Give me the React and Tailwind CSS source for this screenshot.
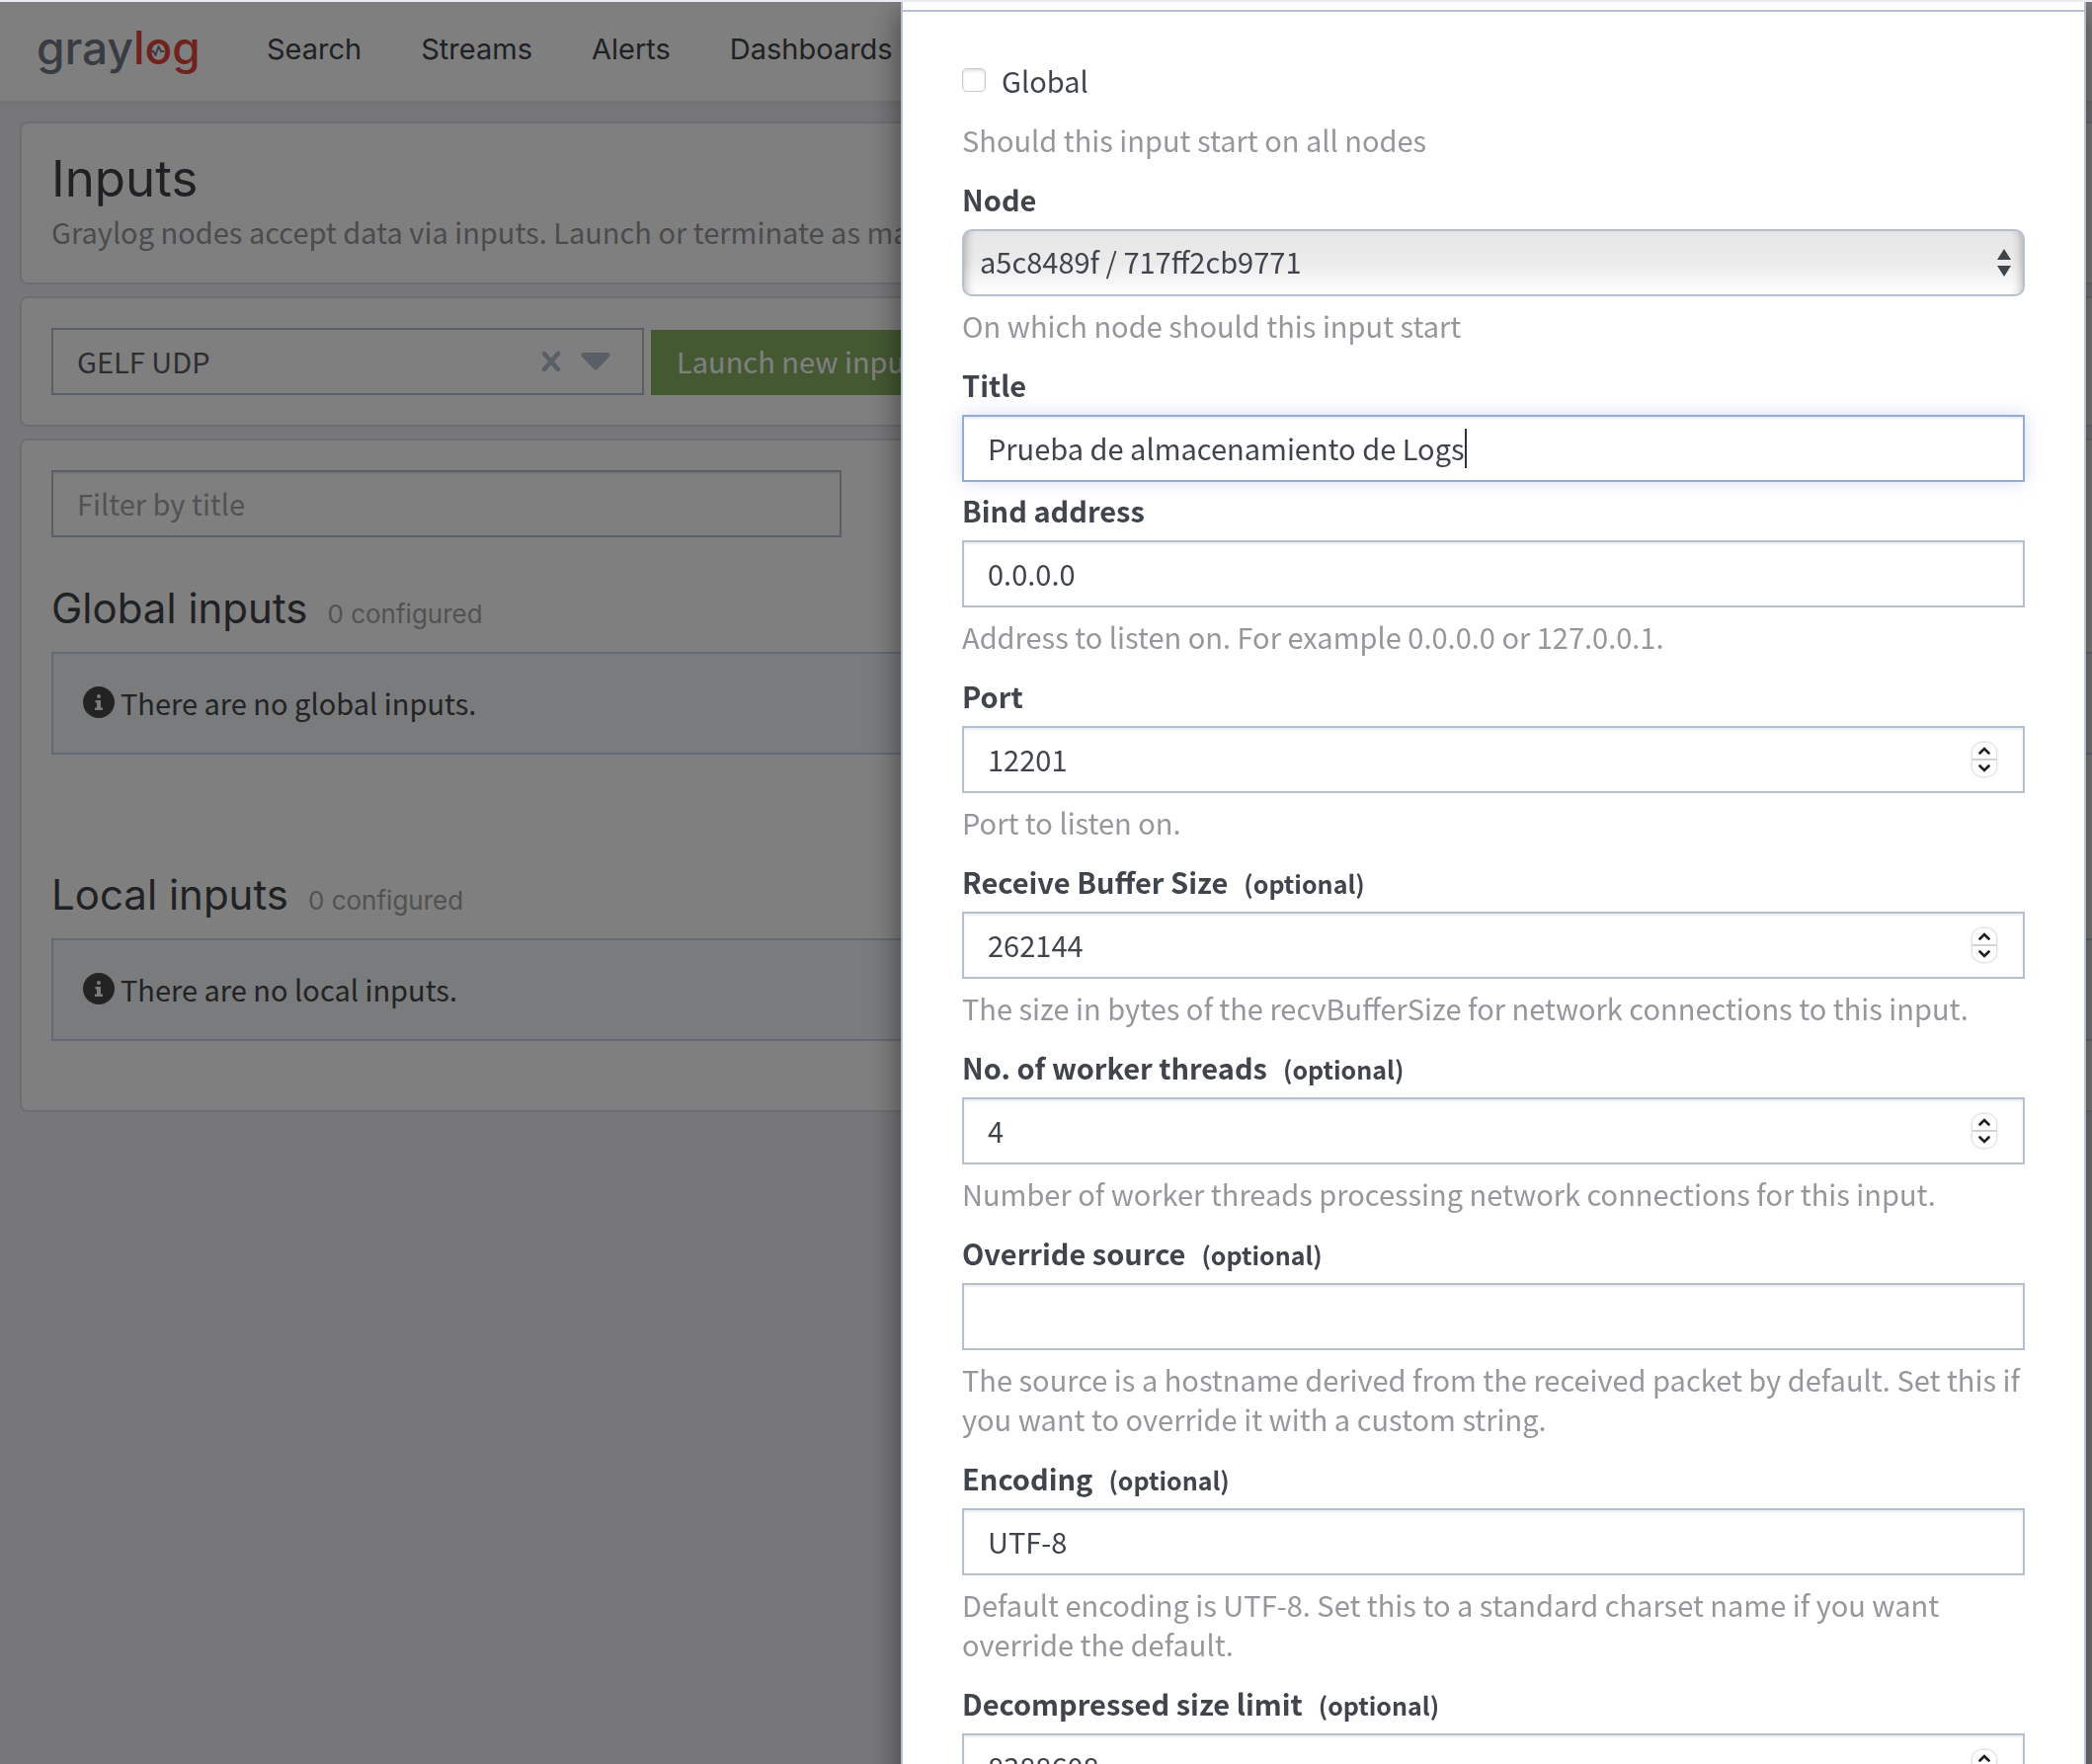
import React from "react";

const SANS = "font-['Noto_Sans_CJK_SC',sans-serif]";
const HEAD = "font-['Inter','Liberation_Sans',sans-serif]";

function Logo() {
  return (
    <a href="#home" aria-label="graylog" className="block">
      <svg viewBox="0 0 180 64" className="block h-16 w-[180px]">
        <text y="46" fontSize="46" className="font-['Inter',sans-serif] font-medium">
          <tspan x="-1" fill="#727885">gray</tspan>
          <tspan x="97" fill="#e0443f">log</tspan>
        </text>
        <path
          d="M115 33h2.500l2 4 3-9 2.500 5h2.500"
          fill="none"
          stroke="#727885"
          strokeWidth="1.800"
          strokeLinecap="round"
          strokeLinejoin="round"
        />
      </svg>
    </a>
  );
}

function InfoIcon() {
  return (
    <svg viewBox="0 0 32 32" className="size-8 shrink-0" aria-hidden="true">
      <circle cx="16" cy="16" r="16" fill="#464646" />
      <circle cx="16" cy="10" r="2" fill="#f3f6f9" />
      <path d="M12.500 14h5.500v7.500h2v2.500h-8v-2.500h2v-5h-1.500z" fill="#f3f6f9" />
    </svg>
  );
}

function Card({ children, className }) {
  return (
    <section className={`rounded-l-lg border-2 border-r-0 border-[#dddde4] bg-white pl-[30px] ${className}`}>
      {children}
    </section>
  );
}

function InputList({ title, message }) {
  return (
    <>
      <h2 className={`${HEAD} flex items-baseline gap-5 text-[42px] leading-[56px] text-[#404349]`}>
        {title}
        <small className="text-[26px] leading-none text-[#a5a5a5]">0 configured</small>
      </h2>
      <div className="mt-4 flex h-[104px] items-center gap-1.5 border-2 border-r-0 border-[#c8d3f0] bg-[#f2f6f9] pb-0.5 pl-[30px] text-[#464646]">
        <InfoIcon />
        <span>{message}</span>
      </div>
    </>
  );
}

function Page() {
  return (
    <div className="min-h-screen bg-[#eeeef2]">
      <header className="flex h-[102px] items-center bg-white pl-[38px] shadow-[0_3px_6px_rgba(80,80,90,0.06)]">
        <Logo />
        <nav className={`${HEAD} flex gap-[60px] pb-0.5 pl-[52px] text-[29px] text-[#404349]`}>
          <a href="#search">Search</a>
          <a href="#streams">Streams</a>
          <a href="#alerts">Alerts</a>
          <a href="#dashboards">Dashboards</a>
        </nav>
      </header>
      <main className="flex flex-col gap-3 pt-[21px] pl-5 whitespace-nowrap">
        <Card className="h-[165px] pt-[26px]">
          <h1 className={`${HEAD} mb-[3px] text-[51px] leading-[60px] text-[#404349]`}>Inputs</h1>
          <p className="text-[#96979b]">
            Graylog nodes accept data via inputs. Launch or terminate as many inputs as you want here.
          </p>
        </Card>
        <Card className="flex gap-[7px] py-[30px]">
          <div className="flex h-[68px] w-[600px] items-center border-2 border-[#b5bfce] pr-8 pb-0.5 pl-6 text-[#5a5c63]">
            <span className="flex-1">GELF UDP</span>
            <button type="button" aria-label="Clear" className="mr-5">
              <svg viewBox="0 0 20 22" className="h-[22px] w-5">
                <path d="M3 4l14 16M17 4l-14 16" stroke="#b5bfce" strokeWidth="4.500" strokeLinecap="round" />
              </svg>
            </button>
            <button type="button" aria-label="Open">
              <svg viewBox="0 0 30 20" className="h-5 w-[30px]">
                <path d="M3 4.500h24l-12 12.500z" fill="#b5bfce" stroke="#b5bfce" strokeWidth="5" strokeLinejoin="round" />
              </svg>
            </button>
          </div>
          <button type="button" className="mt-0.5 h-[66px] bg-[#88b264] px-[26px] pb-1 text-white">
            Launch new input
          </button>
        </Card>
        <Card className="pt-[30px] pb-[70px]">
          <input
            aria-label="Filter by title"
            placeholder="Filter by title"
            className="block h-[68px] w-[800px] border-2 border-[#b5bfce] px-6 pb-0.5 shadow-[inset_0_2px_2px_rgba(0,0,0,0.08)] placeholder:text-[#a5a5a5]"
          />
          <div className="pt-11">
            <InputList title="Global inputs" message="There are no global inputs." />
          </div>
          <div className="pt-[114px]">
            <InputList title="Local inputs" message="There are no local inputs." />
          </div>
        </Card>
      </main>
    </div>
  );
}

function Spinner() {
  const part = "flex h-[17px] w-6 items-center justify-center border-[#d2d2d2] bg-white";
  return (
    <span className="absolute top-[17px] right-[29px] flex flex-col rounded-[10px] shadow-[0_0_3px_rgba(0,0,0,0.35)]">
      <button type="button" aria-label="Increase" className={`${part} rounded-t-[10px] border-b`}>
        <svg viewBox="0 0 12 8" className="h-2 w-3">
          <path d="M1.500 6.500l4.500-4.500 4.500 4.500" fill="none" stroke="#1f1f1f" strokeWidth="2.600" strokeLinecap="round" />
        </svg>
      </button>
      <button type="button" aria-label="Decrease" className={`${part} rounded-b-[10px] border-t`}>
        <svg viewBox="0 0 12 8" className="h-2 w-3">
          <path d="M1.500 1.500l4.500 4.500 4.500-4.500" fill="none" stroke="#1f1f1f" strokeWidth="2.600" strokeLinecap="round" />
        </svg>
      </button>
    </span>
  );
}

function Field({ id, label, optional, help, type = "text", value, focused }) {
  const border = focused
    ? "border-[#93abd6] shadow-[inset_0_2px_2px_rgba(0,0,0,0.08),0_0_16px_rgba(112,142,214,0.3)]"
    : "border-[#b5bfce] shadow-[inset_0_2px_2px_rgba(0,0,0,0.08)]";
  return (
    <div className={help ? "pb-5" : "pb-2"}>
      <label htmlFor={id} className="flex items-baseline gap-4 pb-[11px] font-bold">
        {label}
        {optional && <small className="text-[25px] leading-none">(optional)</small>}
      </label>
      <div className="relative">
        <input
          id={id}
          type={type}
          defaultValue={value}
          className={`block h-[68px] w-full border-2 bg-white px-6 pb-0.5 outline-none [appearance:textfield] [&::-webkit-inner-spin-button]:appearance-none ${border}`}
        />
        {type === "number" && <Spinner />}
        {focused && <span className="absolute top-3.5 left-[509px] h-10 w-0.5 bg-[#2f3238]" />}
      </div>
      {help && <p className="pt-[9px] text-[#96979b]">{help}</p>}
    </div>
  );
}

function Modal() {
  return (
    <div className="fixed inset-0 flex justify-end overflow-hidden bg-black/50 pr-1.5">
      <div
        role="dialog"
        aria-label="Launch new input"
        className="h-max w-full max-w-[1200px] border-x-2 border-[#b5bfce] bg-white pt-2.5 text-[#40444d] shadow-[0_10px_30px_rgba(0,0,0,0.5)]"
      >
        <form className="border-t-2 border-[#b5bfce] px-[60px] pt-[49px] pb-10">
          <label className="flex items-center gap-4">
            <input
              type="checkbox"
              className="size-6 appearance-none rounded-[5px] border border-[#c8c8c8] bg-white shadow-[inset_0_2px_3px_rgba(0,0,0,0.12)]"
            />
            Global
          </label>
          <p className="pt-5 pb-5 text-[#96979b]">Should this input start on all nodes</p>

          <label htmlFor="node" className="block pb-[11px] font-bold">
            Node
          </label>
          <div className="relative">
            <select
              id="node"
              className="block h-[68px] w-full appearance-none rounded-[10px] border-2 border-[#b5bfce] bg-linear-to-b from-[#e6e6e6] via-[#ebebeb] to-white pb-1 pl-4 shadow-[inset_10px_0_8px_-8px_rgba(0,0,0,0.25),inset_-10px_0_8px_-8px_rgba(0,0,0,0.25)]"
            >
              <option>a5c8489f / 717ff2cb9771</option>
            </select>
            <svg
              viewBox="0 0 14 28"
              aria-hidden="true"
              className="pointer-events-none absolute top-5 right-3.5 h-7 w-3.5"
            >
              <path d="M7 0l7 11h-14zM7 28l7-11h-14z" fill="#40444d" />
            </svg>
          </div>
          <p className="pt-[9px] pb-5 text-[#96979b]">On which node should this input start</p>

          <Field id="title" label="Title" value="Prueba de almacenamiento de Logs" focused />
          <Field
            id="bind"
            label="Bind address"
            value="0.0.0.0"
            help="Address to listen on. For example 0.0.0.0 or 127.0.0.1."
          />
          <Field id="port" label="Port" type="number" value="12201" help="Port to listen on." />
          <Field
            id="buffer"
            label="Receive Buffer Size"
            optional
            type="number"
            value="262144"
            help="The size in bytes of the recvBufferSize for network connections to this input."
          />
          <Field
            id="threads"
            label="No. of worker threads"
            optional
            type="number"
            value="4"
            help="Number of worker threads processing network connections for this input."
          />
          <Field
            id="source"
            label="Override source"
            optional
            value=""
            help="The source is a hostname derived from the received packet by default. Set this if you want to override it with a custom string."
          />
          <Field
            id="encoding"
            label="Encoding"
            optional
            value="UTF-8"
            help="Default encoding is UTF-8. Set this to a standard charset name if you want override the default."
          />
          <Field id="limit" label="Decompressed size limit" optional type="number" value="8388608" />
        </form>
      </div>
    </div>
  );
}

export default function App() {
  return (
    <div className={`${SANS} h-screen overflow-hidden text-[29px] leading-10`}>
      <Page />
      <Modal />
      <div className="fixed inset-x-0 top-0 h-0.5 bg-[#ebebf2]" />
    </div>
  );
}
